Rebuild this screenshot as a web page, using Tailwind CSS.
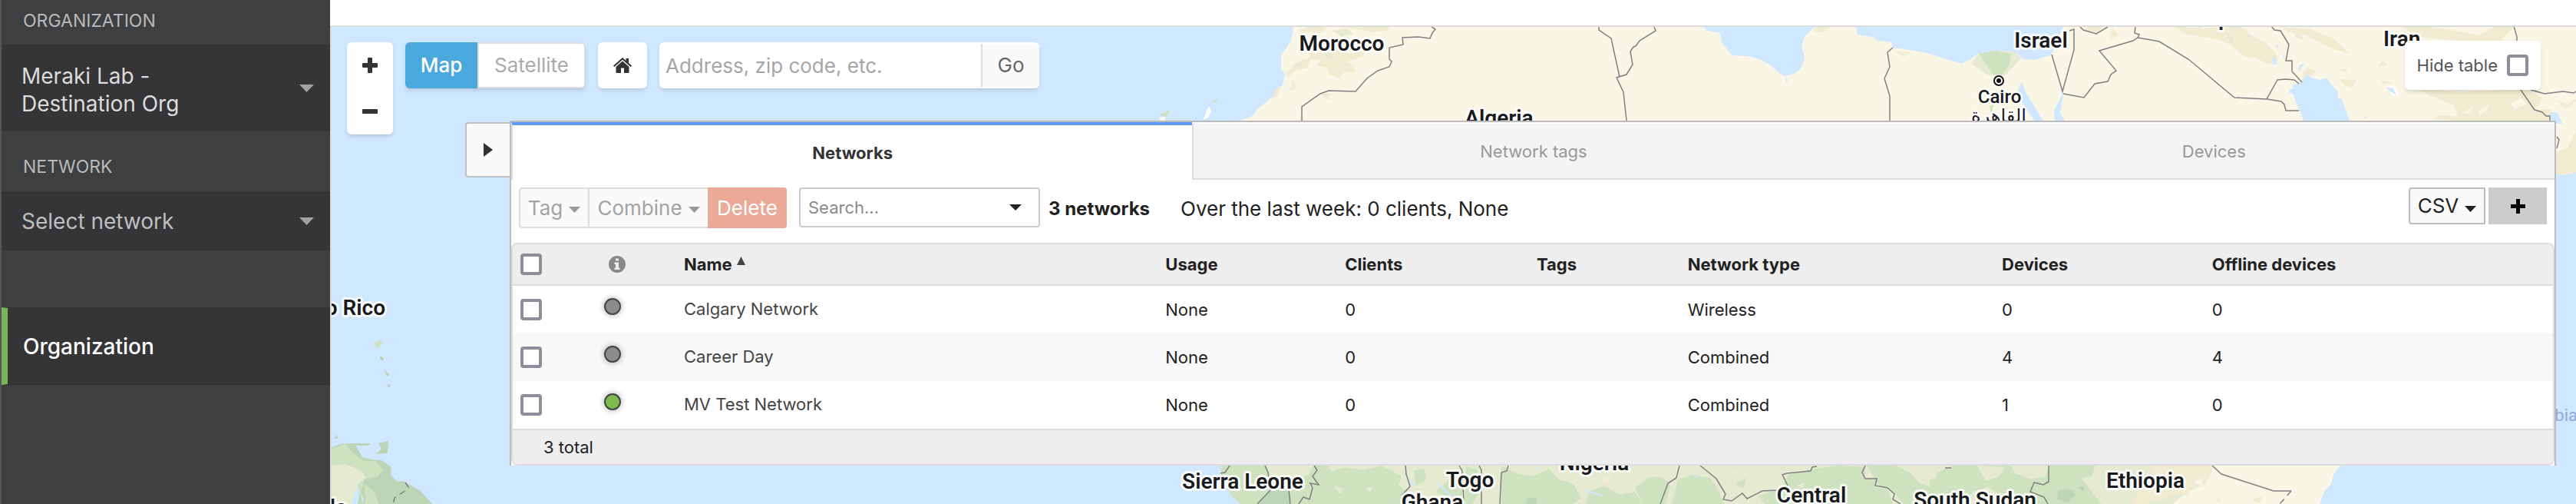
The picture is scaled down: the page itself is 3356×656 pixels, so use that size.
<!DOCTYPE html>
<html lang="en">
<head>
<meta charset="utf-8">
<title>Organization overview</title>
<script src="https://cdn.jsdelivr.net/npm/@tailwindcss/browser@4"></script>
</head>
<body class="flex min-h-screen bg-white font-['Inter','Liberation_Sans',sans-serif] text-[22px] leading-7 text-[#222]">

<aside class="flex w-[430px] shrink-0 flex-col border-l-2 border-[#545657] bg-[#3d3f40]">
  <h2 class="flex h-[58px] items-center px-7 pb-1 text-[23px] text-[#b9babb]">ORGANIZATION</h2>
  <button type="button" class="flex h-[113px] items-center justify-between bg-[#353537] pl-[26px] pr-[21px] text-left text-[28px] leading-9 text-[#dcdcdd]">
    <span class="pt-1">Meraki Lab -<br>Destination Org</span>
    <svg class="h-[10px] w-[19px]" viewBox="0 0 19 10" fill="#a2a2a3"><path d="M0 0H19L9.500 10Z"/></svg>
  </button>
  <h2 class="flex h-[78px] items-end px-7 pb-[18px] text-[23px] text-[#b9babb]">NETWORK</h2>
  <button type="button" class="flex h-[77px] items-center justify-between bg-[#353537] pl-[26px] pr-[21px] text-left text-[28px] leading-9 text-[#bfbfc0]">
    <span>Select network</span>
    <svg class="h-[10px] w-[19px]" viewBox="0 0 19 10" fill="#a2a2a3"><path d="M0 0H19L9.500 10Z"/></svg>
  </button>
  <nav class="mt-[74px]">
    <a href="#organization" class="flex h-[101px] items-center border-y border-l-8 border-y-[#323234] border-l-[#7ab55a] bg-[#353537] pl-5 text-[28px] font-medium text-white">Organization</a>
  </nav>
</aside>

<main class="flex min-w-0 flex-1 flex-col">
  <div class="h-[33px] bg-white"></div>
  <section class="relative flex-1 overflow-hidden border-l-2 border-t-2 border-[#dcdcdc] bg-[#cfe7ff]">

    <!-- World map -->
    <svg class="absolute inset-0 size-full" viewBox="432 35 2924 621" preserveAspectRatio="xMinYMin slice" aria-label="Map">
      <!-- North Africa and the Middle East -->
      <path fill="#faf6e6" d="M1685 35L1682 53 1669 72V90L1674 97 1671 110 1659 125 1637 143 1633 150 1613 158V226H3330L3342 228 3356 224V35H2688L2677 62 2671 72 2650 78 2635 77 2626 68 2601 66 2577 70 2568 77 2555 83 2510 69 2476 63 2466 63 2464 55 2446 53 2440 48 2420 45 2418 35H2364L2351 47 2347 60 2351 75Q2348 90 2339 95L2326 99Q2318 97 2307 85 2290 74 2275 73L2257 72 2250 64 2243 55 2241 43 2224 40 2219 35Z"/>
      <g fill="#f1ebd2">
        <path d="M1690 40L1706 35H1730L1722 43 1700 42ZM1745 35H1812L1808 40 1790 42 1760 37ZM1704 66L1725 70 1740 62 1758 70 1778 66 1775 74 1755 80 1764 86 1765 95 1752 93 1745 102 1732 97 1728 88 1716 85 1720 78 1706 77ZM1690 82L1708 74 1704 88 1686 92 1678 102 1675 95ZM1684 103L1690 112 1686 117H1680ZM1662 116L1669 112 1664 126 1658 128ZM1720 122L1737 121 1730 126 1738 132 1728 128Z"/>
        <path d="M2364 35H2385L2374 42 2362 42ZM2466 66L2490 68 2480 74ZM2715 35H2740L2732 42 2720 41ZM2752 36L2760 46 2748 52ZM2834 35H2920L2930 44 2952 56 2965 70 2968 80 2955 84 2940 76 2925 74 2905 58 2890 52 2870 48 2846 44ZM2972 35L3010 38 3040 50 3062 70 3040 64 3005 46 2982 42ZM3082 35H3130L3150 48 3190 52 3255 56 3275 35H3250L3230 46 3200 40 3170 35Z"/>
        <path d="M3000 94L3006 88 3016 92 3014 99 3006 96 2999 107ZM3047 91L3058 89 3056 94ZM3049 103L3068 104 3069 107 3062 115 3052 109ZM3098 86L3104 79 3111 85ZM3102 104L3118 108 3104 110ZM3140 112L3200 120 3270 117 3295 117 3312 128 3302 143 3325 142 3320 157H3192L3172 155 3178 150 3202 151 3198 138 3180 130ZM3330 130L3345 136 3356 128V132L3342 142ZM3330 198L3345 192 3356 170V224L3344 227 3330 227Z"/>
      </g>
      <g fill="#faf6e6">
        <path d="M3208 147L3222 138 3219 148ZM3228 145L3244 134 3240 143 3230 151ZM3270 135L3285 128 3292 136 3276 142Z"/>
      </g>
      <g fill="#e6ead1">
        <path d="M1735 40L1755 37 1764 44 1748 48ZM1722 70L1738 66 1732 76ZM1684 86L1700 76 1694 90ZM2568 82L2578 70 2601 66 2626 68 2633 76 2622 88 2612 98H2590L2575 88ZM2990 43L2999 46 3001 52 2990 48ZM2900 40L2910 50 2908 57 2902 49Z"/>
      </g>
      <g fill="#cee2bf">
        <path d="M2578 70L2601 66 2620 70 2618 84 2608 97H2597L2588 85ZM2592 138L2597 136 2594 150ZM1578 135L1586 126 1585 131 1578 135ZM1510 150L1524 143 1520 152ZM1567 157L1574 148 1571 157Z"/>
      </g>
      <path fill="#fff" d="M1575 138L1578 144 1574 153 1567 157 1571 147ZM1510 153L1518 152V157H1512ZM3109 112L3120 112 3126 124 3118 125Z"/>
      <g fill="#cfe7ff">
        <path d="M2634 107L2639 120 2647 133 2662 157H2650L2641 143 2630 127 2629 117ZM2687 119L2688 124 2684 147 2690 157H2677L2676 143 2685 127Z"/>
        <path d="M3006 96L3011 101 3022 104 3032 101 3034 107 3046 119V128L3051 129 3061 157H3001L2987 122 2982 121 2983 117 2988 115 2987 110 2997 108Z"/>
        <path d="M2994 92L2996 85 3002 82 2997 91ZM2960 78L2964 72 2966 84 2959 83ZM2965 57L2968 60 2967 65ZM2974 70L2976 72 2975 79ZM3110 113L3118 115 3122 124 3112 118ZM3323 146H3331L3339 161H3331L3323 155ZM2326 100L2330 107 2327 106ZM3080 152H3084L3081 154ZM2928 44L2931 46 2929 50Z"/>
      </g>
      <!-- Central Africa -->
      <path fill="#e6ead1" d="M1590 600V617L1599 622V637L1607 648 1616 656H2880V600Z"/>
      <path fill="#cee2bf" d="M1590 600H1648L1655 618 1680 625 1705 618 1712 606H1730L1735 614 1752 608 1776 612 1800 606 1826 620 1822 632 1840 645V656H1616L1607 648 1599 637V622L1591 617ZM1842 612L1856 610 1858 624 1845 632ZM1870 640L1890 622 1905 632V650L1885 646ZM1910 606L1925 612 1928 640 1918 656H1908ZM1956 606L1975 616 1998 620 2018 610 2030 624 2050 630 2060 648 2050 656H1956ZM2070 640L2090 632 2110 644 2130 640 2140 656H2066ZM2130 634L2152 620 2166 622 2176 630 2170 656H2140ZM2186 624L2205 618 2228 622 2238 636 2246 656H2178ZM2260 630L2275 622 2272 636ZM2330 618L2362 610 2395 606 2430 608 2430 624 2444 625 2444 634 2460 638 2466 656H2300L2290 646 2320 636ZM2432 606H2470L2490 616 2500 628 2515 634 2512 618 2530 612 2545 606H2620L2625 616 2645 624 2665 620 2670 606H2730L2725 620 2712 622 2722 636 2738 656H2640L2610 648 2590 634 2570 640 2560 656H2480L2466 640 2446 630ZM2575 614L2590 618 2585 630Z"/>
      <path fill="#e6ead1" d="M2500 614L2525 612 2522 622 2508 626ZM2575 606L2612 608 2604 620 2588 626ZM2340 632L2352 628 2348 636ZM1738 632L1750 636 1746 643ZM1780 636L1788 634 1786 642Z"/>
      <path fill="#bcd5b7" d="M1655 638H1679L1681 656H1640ZM1990 648H2002V656H1988ZM2682 638L2700 637 2704 644 2694 654 2680 650ZM2708 634L2716 632 2714 640Z"/>
      <path fill="#faf6e6" d="M2800 606H3049L3040 618 3037 630 3028 640 3022 656H2830L2850 640 2868 632Z"/>
      <path fill="#f1ebd2" d="M2800 606H2882L2876 618 2860 626 2850 645 2836 642 2820 650 2790 656H2775L2790 636 2806 622ZM2866 606H2884L2880 618 2870 634ZM2886 650L2892 648 2894 656ZM2934 650L2948 645 2944 656ZM2085 624L2098 618 2100 626 2090 632ZM2258 612L2268 614 2264 622Z"/>
      <path fill="none" stroke="#cfe7ff" stroke-width="2" d="M1830 606L1832 620 1842 632M1872 628L1884 640 1896 650M2066 639L2088 645M2205 618L2212 622M1999 606L2002 611"/>
      <!-- South America and the Antilles -->
      <path fill="#bcd5b7" d="M432 583L443 578 460 577H483L480 580H464L472 595 484 598 497 599 510 608 509 618 517 627 525 626 548 639 563 656H432ZM506 574L505 590 490 591 497 584 493 577ZM438 566L441 571H436ZM495 463L500 466 499 470 495 467ZM500 481L508 488 504 490ZM504 502L508 500V505Z"/>
      <path fill="#cee2bf" d="M432 584L450 578 462 592 474 600 490 600 499 612 492 620 475 624 466 656H432ZM488 446L494 443 499 447 490 453ZM475 630L488 640 493 656H476Z"/>
      <path fill="#e6ead1" d="M432 606L450 604 470 612 477 622 466 630 464 656H432Z"/>
      <path fill="#cfe7ff" d="M450 635L470 628 468 630ZM462 642L466 632 468 642 466 656H458ZM470 640L474 650 472 656Z"/>
      <!-- Country borders -->
      <g fill="none" stroke="#808080" stroke-width="1.500">
        <path d="M1865 35L1870 38 1866 43 1863 50 1848 48 1827 49 1828 58 1810 62V77L1813 80 1810 87 1795 92 1781 102 1766 119 1731 118 1720 122 1696 139V157M2083 35V39L2099 50 2110 100M2155 35L2157 40 2136 53 2131 60 2128 61 2124 67 2127 84 2119 97 2106 101 2115 120 2119 157"/>
        <path d="M2466 62L2459 68 2462 87 2455 102 2462 125V157M2673 71L2687 119 2702 65V38L2696 40M2710 35L2714 39 2731 44 2746 35M2782 35L2781 43 2787 45 2785 49 2779 53 2735 66 2757 92 2750 97 2746 106 2729 109 2715 127 2688 122M2785 49L2813 54 2851 77 2911 127 2953 129 2972 132 2976 136 2978 144 2995 144M2953 129L2967 104 2978 103 2989 104 2995 109M2959 34L2963 39 2971 40 2982 58 2978 79H2986V93L2999 107"/>
        <path d="M3275 34L3279 48V60M3284 117L3302 143 3312 146 3317 151H3322V157M3297 117L3315 122 3339 119 3353 121 3356 119M3331 178L3334 182 3331 193"/>
        <path d="M1602 606L1596 615 1590 616M1648 606L1652 615 1655 638 1638 656M1712 606L1716 612 1710 620 1718 631 1707 629 1710 635 1706 650 1698 647 1692 656M1679 637L1681 656M1831 606L1832 617 1837 633 1826 645M1901 606L1905 613 1907 652M1927 606L1930 612V656M1965 606L1963 613 1956 615 1954 656M2188 606L2184 622 2173 629 2163 656M2215 606L2236 623 2248 643 2245 650 2256 652 2270 642 2276 649 2296 639 2317 638 2329 632 2322 618 2328 616 2359 613 2361 608 2367 607"/>
        <path d="M2430 606L2426 615 2430 623H2445L2443 632 2459 635 2468 643 2466 650 2476 656M2669 606V627L2662 631 2650 628 2645 640 2663 647 2668 656M2534 609H2542M2882 606L2894 617 2962 639H2985"/>
        <path stroke-dasharray="8 6" d="M2985 639L2970 656M528 628L532 634 526 640 514 648 512 656"/>
      </g>
      <circle cx="2604" cy="105" r="6" fill="#fff" stroke="#111" stroke-width="2"/><circle cx="2604" cy="105" r="3" fill="#111"/>
      <g class="font-['Roboto',sans-serif] text-[28px] font-semibold" fill="#181a1c" stroke="#fff" stroke-opacity=".85" stroke-width="6" stroke-linejoin="round" paint-order="stroke">
        <text x="1748" y="66" text-anchor="middle">Morocco</text>
        <text x="1953" y="163" text-anchor="middle">Algeria</text>
        <text x="2659" y="62" text-anchor="middle">Israel</text>
        <text x="3105" y="60">Iran</text>
        <text x="2897" y="33" text-anchor="end">Iraq</text>
        <text x="502" y="410" text-anchor="end">Puerto Rico</text>
        <text x="452" y="670" text-anchor="end">Venezuela</text>
        <text x="1619" y="636" text-anchor="middle">Sierra Leone</text>
        <text x="1915" y="634" text-anchor="middle">Togo</text>
        <text x="1866" y="663" text-anchor="middle">Ghana</text>
        <text x="2077" y="612" text-anchor="middle">Nigeria</text>
        <text x="2360" y="654" text-anchor="middle">Central</text>
        <text x="2573" y="660" text-anchor="middle">South Sudan</text>
        <text x="2795" y="635" text-anchor="middle">Ethiopia</text>
      </g>
      <g class="font-['Roboto','DejaVu_Sans',sans-serif] text-[24px] font-medium" fill="#181a1c" stroke="#fff" stroke-opacity=".85" stroke-width="5" stroke-linejoin="round" paint-order="stroke">
        <text x="2605" y="134" text-anchor="middle">Cairo</text>
        <text x="2604" y="159" text-anchor="middle" class="font-normal">القاهرة</text>
      </g>
      <text x="3295" y="548" class="font-['Roboto',sans-serif] text-[22px]" fill="#93a9da">Arabian Sea</text>
    </svg>

    <div class="relative flex h-[122px] items-start pl-5 pr-[46px] pt-5 text-[26px]">
      <div class="relative z-10 flex w-[60px] shrink-0 flex-col rounded-md bg-white shadow-md">
        <button type="button" aria-label="Zoom in" class="grid h-[60px] place-items-center"><svg class="size-5" viewBox="0 0 20 20" fill="#333"><path d="M7 1Q7 0 8 0H12Q13 0 13 1V7H19Q20 7 20 8V12Q20 13 19 13H13V19Q13 20 12 20H8Q7 20 7 19V13H1Q0 13 0 12V8Q0 7 1 7H7Z"/></svg></button>
        <button type="button" aria-label="Zoom out" class="grid h-[60px] place-items-center"><svg class="h-[6px] w-5" viewBox="0 0 20 6" fill="#333"><rect width="20" height="6" rx="1"/></svg></button>
      </div>
      <div class="ml-4 flex h-[60px] rounded-md shadow-md">
        <button type="button" class="w-[94px] rounded-l-md bg-[#49a8dc] font-medium text-white">Map</button>
        <button type="button" class="w-[141px] rounded-r-md border-2 border-[#ddd] bg-white text-[#aaa]">Satellite</button>
      </div>
      <button type="button" aria-label="Home" class="ml-4 grid h-[60px] w-16 place-items-center rounded-md bg-white shadow-md">
        <svg class="h-5 w-6" viewBox="0 0 24 20" fill="#333"><path d="M12 0L0 10.500L1.500 12L12 2.800L22.500 12L24 10.500L20 7V1H16.500V4Z"/><path d="M12 4.600L3.500 12V19Q3.500 20 4.500 20H10V13.500H14V20H19.500Q20.500 20 20.500 19V12Z"/></svg>
      </button>
      <form class="ml-4 flex h-[60px] w-[495px] items-center rounded-md bg-white shadow-md">
        <input type="text" aria-label="Address" placeholder="Address, zip code, etc." class="h-14 min-w-0 flex-1 border-r-2 border-[#ddd] pl-2 outline-none placeholder:text-[#a6a6a6]">
        <button type="button" class="h-[54px] w-[74px] bg-[#fafafa] text-[#666]">Go</button>
      </form>
      <label class="-mt-[2px] ml-auto flex h-16 items-center gap-3 rounded-md bg-white px-4 text-[22px] text-[#555] shadow-md">Hide table
        <input type="checkbox" class="size-7 appearance-none rounded border-4 border-[#8f8d9b] bg-white">
      </label>
    </div>

    <div class="relative ml-[174px] mr-[26px] flex items-start">
      <button type="button" aria-label="Collapse panel" class="mt-[2px] grid h-[72px] w-[58px] shrink-0 place-items-center rounded-l border-2 border-r-0 border-[#c0c0c0] bg-[#fafafa]">
        <svg class="h-[18px] w-3" viewBox="0 0 12 18" fill="#333"><path d="M0 0L12 9L0 18Z"/></svg>
      </button>
      <div class="min-w-0 flex-1 border-x-2 border-t-2 border-[#bbb] bg-white">
        <div role="tablist" class="grid h-[75px] grid-cols-3">
          <button type="button" role="tab" aria-selected="true" class="border-l-2 border-t-4 border-l-[#ddd] border-t-[#5f9af8] font-bold text-[#333]">Networks</button>
          <button type="button" role="tab" class="mt-[2px] border-b-2 border-l-2 border-[#ddd] bg-[#f4f4f4] text-[#999]">Network tags</button>
          <button type="button" role="tab" class="mt-[2px] border-b-2 border-[#ddd] bg-[#f4f4f4] text-[#999]">Devices</button>
        </div>

        <div class="flex h-[82px] items-start px-[10px] pt-[10px] text-[26px]">
          <button type="button" disabled class="flex h-[53px] w-[92px] items-center justify-center gap-2 rounded-l border-2 border-[#ddd] bg-[#fafafa] text-[#a3a3a3]">Tag
            <svg class="mt-1 h-2 w-[15px]" viewBox="0 0 15 8" fill="#999"><path d="M0 0H15L7.500 8Z"/></svg></button>
          <button type="button" disabled class="flex h-[53px] w-[154px] items-center justify-center gap-2 border-y-2 border-[#ddd] bg-[#fafafa] text-[#a3a3a3]">Combine
            <svg class="mt-1 h-2 w-[15px]" viewBox="0 0 15 8" fill="#999"><path d="M0 0H15L7.500 8Z"/></svg></button>
          <button type="button" disabled class="h-[53px] w-[103px] rounded-r bg-[#ebaa98] text-white">Delete</button>
          <div class="ml-4 flex h-[52px] w-[314px] items-center rounded border-2 border-[#ccc] bg-white pr-[22px]">
            <input type="text" aria-label="Search" placeholder="Search..." class="min-w-0 flex-1 pl-[10px] text-[22px] outline-none placeholder:text-[#8a8a8a]">
            <button type="button" aria-label="Search options"><svg class="h-2 w-4" viewBox="0 0 16 8" fill="#222"><path d="M0 0H16L8 8Z"/></svg></button>
          </div>
          <strong class="ml-[11px] flex h-14 items-center text-[24px]">3 networks</strong>
          <p class="ml-10 flex h-14 items-center">Over the last week: 0 clients, None</p>
          <button type="button" class="ml-auto flex h-12 w-[100px] items-center justify-center gap-2 rounded-l border-2 border-[#bbb] bg-[#fafafa]">CSV
            <svg class="mt-2 h-2 w-[15px]" viewBox="0 0 15 8" fill="#222"><path d="M0 0H15L7.500 8Z"/></svg></button>
          <button type="button" aria-label="Add network" class="ml-1 grid h-12 w-[76px] place-items-center bg-[#ccc]">
            <svg class="size-[19px]" viewBox="0 0 19 19"><path d="M7 0H12V7H19V12H12V19H7V12H0V7H7Z"/></svg></button>
        </div>

        <div class="overflow-hidden rounded-lg border-2 border-[#ddd]">
          <table class="w-full table-fixed border-separate border-spacing-0 text-left">
            <colgroup><col class="w-[105px]"><col class="w-[108px]"><col class="w-[23.6%]"><col class="w-[8.8%]"><col class="w-[9.4%]"><col class="w-[7.4%]"><col class="w-[15.4%]"><col class="w-[10.3%]"><col></colgroup>
            <thead class="bg-[#eee] [&_th]:h-[54px] [&_th]:border-b-2 [&_th]:border-[#ddd] [&_th]:p-0 [&_th]:pl-[10px]">
              <tr>
                <th><input type="checkbox" aria-label="Select all networks" class="block size-7 appearance-none rounded border-4 border-[#8f8d9b] bg-white"></th>
                <th><svg class="ml-[10px] size-[22px]" viewBox="0 0 22 22" aria-label="Status"><circle cx="11" cy="11" r="11" fill="#888"/><path fill="#eee" d="M9 3.500H13V6.500H9ZM7.500 8.500H13V15.500H14.500V18H7.500V15.500H9V11H7.500Z"/></svg></th>
                <th><span class="flex items-start">Name<svg class="ml-[6px] mt-1 h-[11px] w-[11px]" viewBox="0 0 11 11" fill="#444"><path d="M5.500 0L11 11H0Z"/></svg></span></th>
                <th>Usage</th><th>Clients</th><th>Tags</th><th>Network type</th><th>Devices</th><th>Offline devices</th>
              </tr>
            </thead>
            <tbody class="[&_td]:h-[62px] [&_td]:p-0 [&_td]:pl-[10px]">
              <tr>
                <td><input type="checkbox" aria-label="Select Calgary Network" class="block size-7 appearance-none rounded border-4 border-[#8f8d9b] bg-white"></td>
                <td><span class="mb-2 ml-1 block size-[22px] rounded-full border-2 border-[#444] bg-[#8c8c8c] shadow-[0_0_6px_2px_#0003]"></span></td>
                <td><a href="#calgary" class="block pb-[2px] text-[#444]">Calgary Network</a></td>
                <td>None</td><td>0</td><td></td><td>Wireless</td><td>0</td><td>0</td>
              </tr>
              <tr class="bg-[#f8f8f8]">
                <td><input type="checkbox" aria-label="Select Career Day" class="block size-7 appearance-none rounded border-4 border-[#8f8d9b] bg-white"></td>
                <td><span class="mb-2 ml-1 block size-[22px] rounded-full border-2 border-[#444] bg-[#8c8c8c] shadow-[0_0_6px_2px_#0003]"></span></td>
                <td><a href="#career" class="block pb-[2px] text-[#444]">Career Day</a></td>
                <td>None</td><td>0</td><td></td><td>Combined</td><td>4</td><td>4</td>
              </tr>
              <tr>
                <td><input type="checkbox" aria-label="Select MV Test Network" class="block size-7 appearance-none rounded border-4 border-[#8f8d9b] bg-white"></td>
                <td><span class="mb-2 ml-1 block size-[22px] rounded-full border-2 border-[#444] bg-[#7fba4f] shadow-[0_0_6px_2px_#0003]"></span></td>
                <td><a href="#mvtest" class="block pb-[2px] text-[#444]">MV Test Network</a></td>
                <td>None</td><td>0</td><td></td><td>Combined</td><td>1</td><td>0</td>
              </tr>
            </tbody>
            <tfoot class="bg-[#eee]">
              <tr><td colspan="9" class="h-[46px] border-t-2 border-[#ddd] p-0 pl-10">3 total</td></tr>
            </tfoot>
          </table>
        </div>
      </div>
    </div>
  </section>
</main>
</body>
</html>
